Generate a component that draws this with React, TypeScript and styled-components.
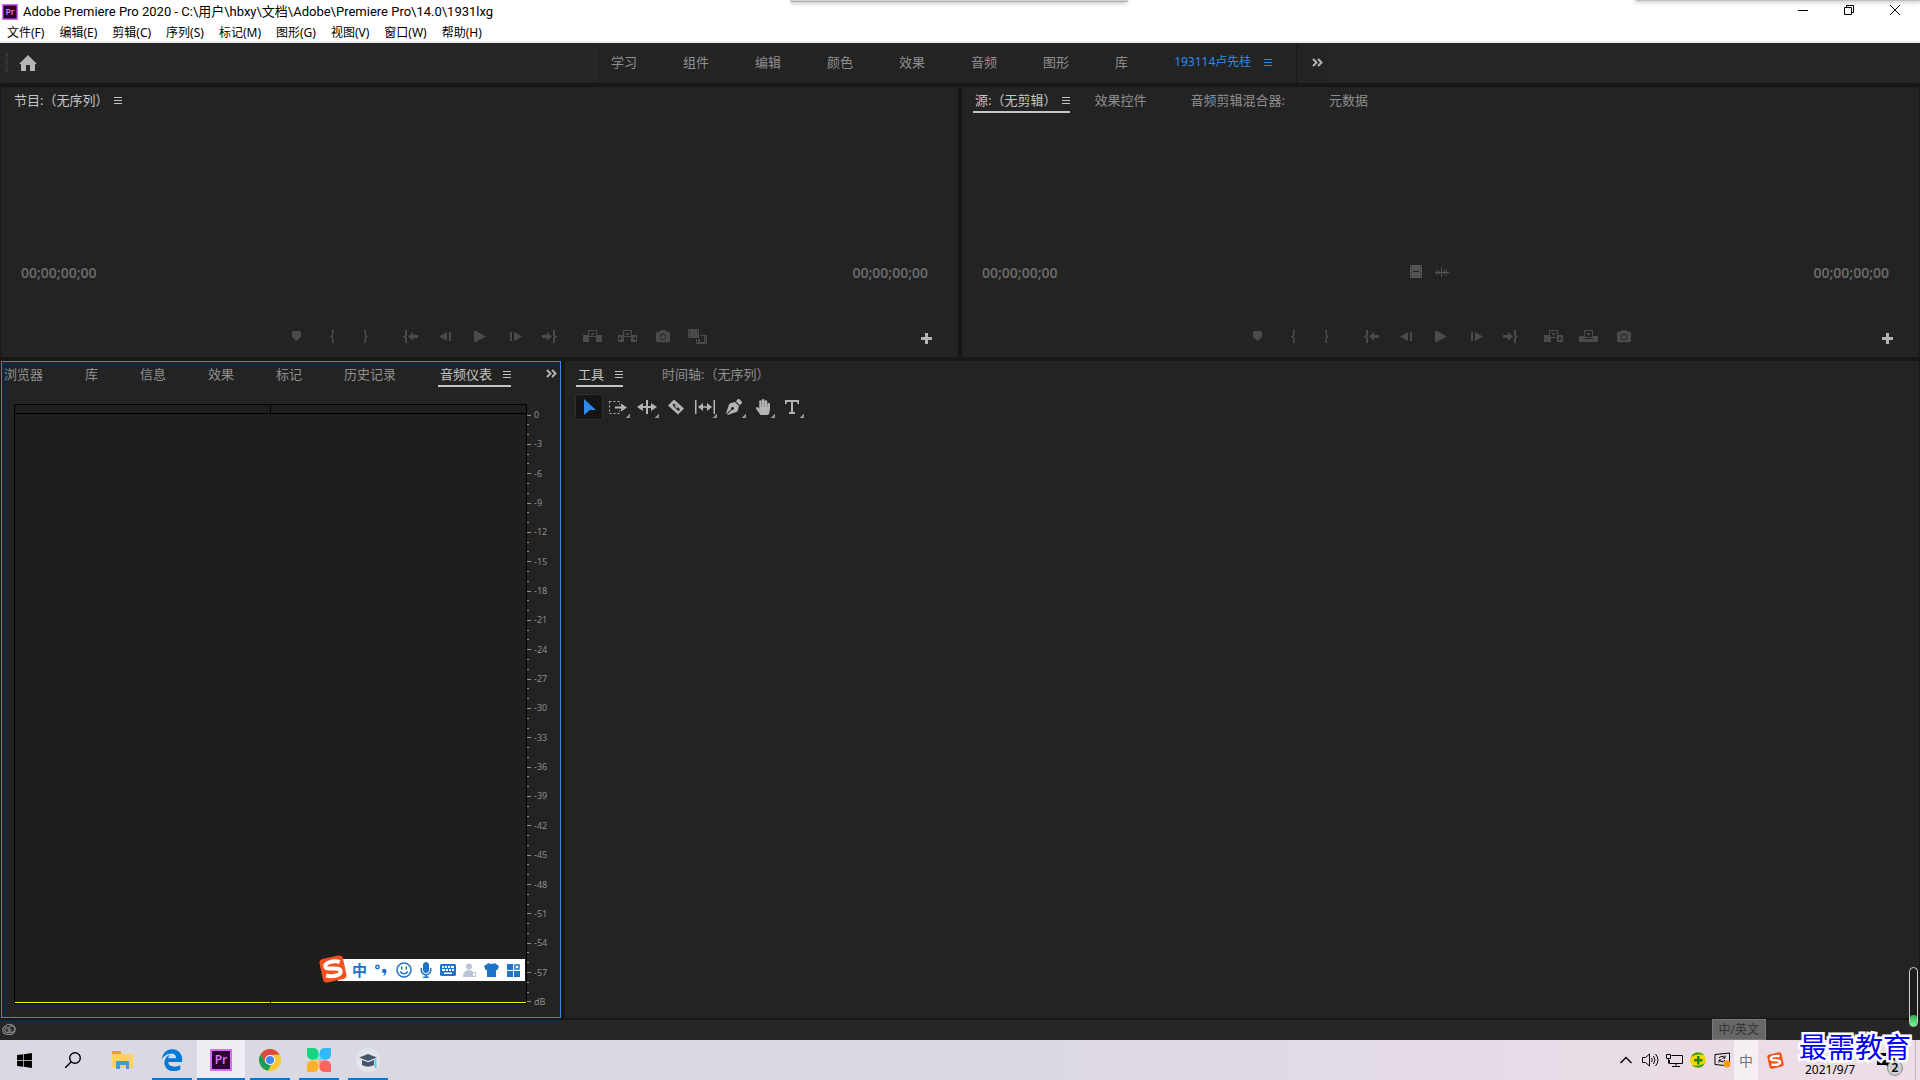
import React from "react";
import styled, { createGlobalStyle } from "styled-components";
import {
  FaCamera,
  FaGraduationCap,
  FaHandPaper,
  FaMicrophone,
  FaPenNib,
  FaWindows,
} from "react-icons/fa";

const color = {
  gap: "#171717",
  panel: "#232323",
  chrome: "#262626",
  text: "#8f8f8f",
  bright: "#c4c4c4",
  icon: "#b4b4b4",
  disabled: "#4b4b4b",
  accent: "#2d8ceb",
  ime: "#1e73c8",
};

const GlobalStyle = createGlobalStyle`
  * { box-sizing: border-box; }
  body {
    margin: 0;
    background: ${color.gap};
    font-family: "Noto Sans", "Noto Sans CJK SC", sans-serif;
    font-size: 12px;
  }
  button {
    margin: 0;
    padding: 0;
    border: 0;
    background: none;
    color: inherit;
    font: inherit;
    white-space: nowrap;
  }
  svg { display: block; flex: none; }
`;

const Screen = styled.div`
  position: relative;
  display: flex;
  flex-direction: column;
  height: 100vh;
  overflow: hidden;
`;

/* ---------- window frame ---------- */

const WindowFrame = styled.header`
  position: relative;
  background: #fff;
  color: #000;
  border-bottom: 2px solid #eef0ee;
`;

const TitleBar = styled.div`
  display: flex;
  align-items: center;
  height: 24px;
  padding-left: 2px;
  gap: 5px;
`;

const Title = styled.h1`
  flex: 1;
  margin: 0;
  font-family: Roboto, "Noto Sans CJK SC", sans-serif;
  font-size: 13px;
  line-height: 16px;
  font-weight: 400;
`;

const WindowButton = styled.button`
  display: grid;
  place-items: center;
  width: 46px;
  height: 20px;
  margin-bottom: 4px;
`;

const WindowButtons = styled.div`
  display: flex;
  padding-right: 2px;
`;

const MenuBar = styled.nav`
  display: flex;
  gap: 15px;
  height: 17px;
  padding-left: 7px;
  line-height: 16px;
`;

const DockedHandle = styled.div`
  position: absolute;
  top: 0;
  left: 790px;
  width: 338px;
  height: 2px;
  border-bottom: 1px solid #a8a8a8;
  border-radius: 0 0 4px 4px;
  background: #d8d8d8;
  box-shadow: 0 1px 4px rgba(0, 0, 0, 0.4);
`;

const DockedShade = styled.div`
  position: absolute;
  top: 0;
  right: 0;
  width: 284px;
  height: 1px;
  background: #c0c0c0;
  box-shadow: 0 0 4px 1px rgba(0, 0, 0, 0.3);
`;

/* ---------- workspace bar ---------- */

const WorkspaceBar = styled.div`
  display: flex;
  height: 40px;
  background: ${color.chrome};
`;

const HomeArea = styled.div`
  display: flex;
  align-items: center;
  gap: 11px;
  width: 598px;
  padding-left: 5px;
`;

const Grip = styled.span`
  width: 3px;
  height: 20px;
  background: repeating-linear-gradient(#3d3d3d 0 1px, transparent 1px 2px);
`;

const WorkspaceTabs = styled.nav`
  display: flex;
  align-items: center;
  gap: 46px;
  padding: 0 24px 0 13px;
  border-right: 1px solid ${color.gap};
  background: ${color.panel};
  color: ${color.text};
  font-size: 13px;
  line-height: 18px;
`;

const WorkspaceTab = styled.button<{ $active?: boolean }>`
  display: flex;
  align-items: center;
  gap: 13px;
  height: 38px;
  margin-bottom: 2px;
  color: ${(p) => (p.$active ? color.accent : "inherit")};
  font-size: ${(p) => (p.$active ? 12 : 13)}px;
`;

const Overflow = styled.button`
  display: grid;
  place-items: center;
  width: 30px;
  height: 38px;
  padding-left: 10px;
  background: ${color.panel};
  color: ${color.icon};
`;

/* ---------- panels ---------- */

const Panels = styled.main`
  flex: 1;
  display: grid;
  grid-template-rows: 270fr 657fr;
  gap: 4px;
  min-height: 0;
  padding: 4px 1px 2px;
`;

const PanelRow = styled.div<{ $columns: string }>`
  display: grid;
  grid-template-columns: ${(p) => p.$columns};
  gap: 4px;
  min-height: 0;
`;

const Panel = styled.section<{ $focused?: boolean }>`
  position: relative;
  display: flex;
  flex-direction: column;
  min-width: 0;
  min-height: 0;
  background: ${color.panel};
  border: ${(p) => (p.$focused ? `1px solid ${color.accent}` : "0")};
`;

const TabBar = styled.div<{ $left: number; $top?: number }>`
  display: flex;
  align-items: flex-start;
  justify-content: space-between;
  padding: ${(p) => p.$top ?? 4}px 2px 0 ${(p) => p.$left}px;
  color: ${color.text};
  font-size: 13px;
  line-height: 18px;
`;

const TabList = styled.div<{ $gap?: number }>`
  display: flex;
  gap: ${(p) => p.$gap ?? 0}px;
`;

const Tab = styled.button<{
  $active?: boolean;
  $underlined?: boolean;
  $roomy?: boolean;
  $tight?: boolean;
}>`
  display: flex;
  align-items: center;
  gap: ${(p) => (p.$tight ? 6 : 11)}px;
  padding: 0 ${(p) => (p.$roomy ? 20 : 0)}px 2px ${(p) => (p.$underlined ? 2 : 0)}px;
  border-bottom: 2px solid ${(p) => (p.$underlined ? color.bright : "transparent")};
  color: ${(p) => (p.$active ? color.bright : "inherit")};
`;

const TabOverflow = styled.button`
  padding: 4px 1px 0 0;
  color: ${color.icon};
`;

const Viewer = styled.div`
  flex: 1;
`;

const TimeRow = styled.div`
  display: grid;
  grid-template-columns: 1fr auto 1fr;
  align-items: center;
  height: 20px;
  padding: 0 30px 0 20px;
  color: #6c6c6c;
  font-family: "Open Sans", "Noto Sans", sans-serif;
  font-size: 14px;
  font-weight: 600;
  line-height: 20px;
`;

const TimeEnd = styled.span`
  justify-self: end;
`;

const DragHandles = styled.div`
  display: flex;
  gap: 13px;
  height: 20px;
  padding: 2px 12px 0 0;
  color: #555;
`;

const Transport = styled.div`
  display: grid;
  grid-template-columns: 1fr auto 1fr;
  height: 32px;
  margin: 37px 0 5px;
  color: ${color.disabled};
`;

const TransportGroup = styled.div<{ $end?: boolean }>`
  display: flex;
  justify-content: ${(p) => (p.$end ? "flex-end" : "flex-start")};
`;

const TransportButton = styled.button<{ $width?: number }>`
  display: grid;
  place-items: center;
  width: ${(p) => p.$width ?? 34}px;
  height: 32px;
`;

const Space = styled.span<{ $width: number }>`
  width: ${(p) => p.$width}px;
`;

const AddButton = styled.button`
  margin: 4px 26px 0 auto;
  color: ${color.icon};
`;

/* ---------- audio meter ---------- */

const MeterArea = styled.div`
  flex: 1;
  display: flex;
  min-height: 0;
  padding: 17px 0 13px 12px;
`;

const Meter = styled.div`
  flex: 1;
  display: grid;
  grid-template: 8px 1fr / 1fr 1fr;
  gap: 1px;
  padding: 1px;
  background: #000;
`;

const ClipLight = styled.span`
  background: #1e1e1e;
`;

const Channels = styled.div`
  grid-column: 1 / -1;
  display: flex;
  align-items: flex-end;
  gap: 1px;
  background: #1e1e1e;
`;

const Level = styled.span`
  flex: 1;
  height: 1px;
  background: #ffff00;
`;

const Scale = styled.ol`
  display: flex;
  flex-direction: column;
  justify-content: space-between;
  width: 33px;
  margin: 0;
  padding: 11px 0 2px;
  list-style: none;
  color: ${color.text};
  font-size: 9px;
  line-height: 12px;
`;

const Mark = styled.li<{ $major: boolean }>`
  display: flex;
  align-items: center;
  gap: 3px;
  height: 0;

  &::before {
    content: "";
    width: ${(p) => (p.$major ? 4 : 2)}px;
    height: 1px;
    background: ${color.text};
  }
`;

/* ---------- tools ---------- */

const ToolRow = styled.div`
  display: flex;
  gap: 1px;
  padding: 7px 0 0 10px;
  color: ${color.icon};
`;

const ToolButton = styled.button<{ $active?: boolean; $more?: boolean }>`
  position: relative;
  display: grid;
  place-items: center;
  width: 28px;
  height: 26px;
  border: 1px solid ${(p) => (p.$active ? "#303030" : "transparent")};
  border-radius: 3px;
  background: ${(p) => (p.$active ? "#151515" : "none")};
  color: ${(p) => (p.$active ? color.accent : "inherit")};

  &::after {
    content: "";
    display: ${(p) => (p.$more ? "block" : "none")};
    position: absolute;
    right: 1px;
    bottom: 1px;
    width: 4px;
    height: 4px;
    background: linear-gradient(135deg, transparent 50%, ${color.text} 50%);
  }
`;

const StatusBar = styled.footer`
  display: flex;
  align-items: center;
  height: 20px;
  padding: 0 0 2px 2px;
  background: ${color.chrome};
  color: #8a8a8a;
`;

/* ---------- input method bar ---------- */

const ImeBar = styled.div`
  position: absolute;
  right: 35px;
  bottom: 36px;
  display: flex;
  align-items: center;
  height: 22px;
  padding: 0 4px 0 14px;
  gap: 7px;
  background: #fff;
  color: ${color.ime};
`;

const ImeLogo = styled.span`
  position: absolute;
  left: -19px;
  top: -4px;
`;

const ImeButton = styled.button<{ $muted?: boolean }>`
  display: grid;
  place-items: center;
  width: 15px;
  height: 20px;
  color: ${(p) => (p.$muted ? "#b8c4d8" : "inherit")};
  font-size: 15px;
  font-weight: 700;
  line-height: 20px;
`;

/* ---------- taskbar ---------- */

const Taskbar = styled.footer`
  display: flex;
  height: 40px;
  background: linear-gradient(90deg, #dad9e3 0%, #d9d8e3 45%, #e6dbe6 80%, #eedde6 100%);
  color: #000;
`;

const AppButton = styled.button<{ $running?: boolean; $active?: boolean; $width?: number }>`
  position: relative;
  display: grid;
  place-items: center;
  width: ${(p) => p.$width ?? 48}px;
  height: 40px;
  margin-right: 1px;
  background: ${(p) => (p.$active ? "#eeedf3" : "none")};

  &::after {
    content: "";
    display: ${(p) => (p.$running ? "block" : "none")};
    position: absolute;
    bottom: 0;
    left: ${(p) => (p.$active ? 0 : 4)}px;
    right: ${(p) => (p.$active ? 0 : 4)}px;
    height: 2px;
    background: #0078d7;
  }
`;

const Tray = styled.div`
  display: flex;
  align-items: center;
  margin-left: auto;
`;

const TrayButton = styled.button<{ $lit?: boolean; $width?: number }>`
  display: grid;
  place-items: center;
  width: ${(p) => p.$width ?? 24}px;
  height: 40px;
  background: ${(p) => (p.$lit ? "rgba(255, 255, 255, 0.5)" : "none")};
  color: ${(p) => (p.$lit ? "#777" : "#000")};
  font-size: 14px;
`;

const Clock = styled.time`
  display: flex;
  flex-direction: column;
  align-items: center;
  width: 76px;
  font-size: 12px;
  line-height: 19px;
`;

const Notices = styled.button`
  position: relative;
  display: flex;
  align-items: center;
  width: 47px;
  height: 40px;
  padding-left: 9px;
`;

const Badge = styled.span`
  position: absolute;
  right: 12px;
  bottom: 4px;
  width: 16px;
  height: 16px;
  border: 1px solid #8c8c8c;
  border-radius: 50%;
  background: #cfcfcf;
  font-size: 12px;
  font-weight: 600;
  line-height: 14px;
  text-align: center;
`;

const ShowDesktop = styled.button`
  width: 5px;
  height: 40px;
  border-left: 1px solid #c3b8c2;
`;

const Tip = styled.div`
  position: absolute;
  right: 154px;
  bottom: 40px;
  padding: 0 6px;
  border: 1px solid #7a7a7a;
  background: #676767;
  color: #343434;
  font-size: 12px;
  line-height: 19px;
`;

const Watermark = styled.div`
  position: absolute;
  right: 9px;
  bottom: 19px;
  color: #0000f0;
  font-size: 28px;
  line-height: 28px;
  -webkit-text-stroke: 5px #fff;
  paint-order: stroke fill;
`;

const Gauge = styled.div`
  position: absolute;
  right: 2px;
  bottom: 53px;
  display: flex;
  align-items: flex-end;
  width: 9px;
  height: 60px;
  border: 1px solid #d0d0d0;
  border-radius: 5px;
  background: #1c1c1c;
`;

const GaugeFill = styled.span`
  flex: 1;
  height: 11px;
  border-radius: 3px;
  background: linear-gradient(#25b455, #7bf58c);
`;

/* ---------- drawings ---------- */

type IconProps = { w: number; h: number; children: React.ReactNode };
const Icon = ({ w, h, children }: IconProps) => (
  <svg width={w} height={h} viewBox={`0 0 ${w} ${h}`} fill="currentColor" aria-hidden="true">
    {children}
  </svg>
);

const Burger = () => (
  <Icon w={8} h={9}>
    <path d="M0 1h8v1H0zM0 4h8v1H0zM0 7h8v1H0z" />
  </Icon>
);

const Chevrons = () => (
  <Icon w={11} h={9}>
    <path d="M1 1l3.500 3.500L1 8M6 1l3.500 3.500L6 8" fill="none" stroke="currentColor" strokeWidth="2" />
  </Icon>
);

const PrLogo = ({ size }: { size: number }) => (
  <svg width={size} height={size} viewBox="0 0 22 22" aria-hidden="true">
    <rect x="1" y="1" width="20" height="20" fill="#2a0034" stroke="#d76bf5" strokeWidth="2" />
    <text x="11" y="15" fill="#e07bff" fontSize="12" fontFamily="Open Sans, sans-serif" textAnchor="middle" fontWeight="600">
      Pr
    </text>
  </svg>
);

const SogouLogo = ({ size }: { size: number }) => (
  <svg width={size} height={size} viewBox="0 0 28 28" aria-hidden="true">
    <g transform="rotate(-12 14 14)">
      <rect x="2" y="2" width="24" height="24" rx="4" fill="#f4511e" />
      <path
        d="M22 8.500C16 5.500 7 6 7 10c0 4.500 14 2.500 14 7.500 0 4.500-9 4.500-15 1.500"
        fill="none"
        stroke="#fff"
        strokeWidth="4"
      />
    </g>
  </svg>
);

const MarkerIcon = () => (
  <Icon w={9} h={10}>
    <path d="M1 0h7l1 1v5L4.500 10 0 6V1z" />
  </Icon>
);
const InIcon = () => (
  <Icon w={5} h={13}>
    <path d="M2 0h2v1H3.500v4L2.500 6.500 3.500 8v4H4v1H2V8L0 6.500 2 5z" />
  </Icon>
);
const OutIcon = () => (
  <Icon w={5} h={13}>
    <path d="M1 0h2v5l2 1.500L3 8v5H1v-1h.500V8l1-1.500-1-1.500V1H1z" />
  </Icon>
);
const GoInIcon = () => (
  <Icon w={15} h={13}>
    <path d="M2 0h2v5L3 6.500 4 8v5H2V8L0 6.500 2 5zM5 6.500L10 2v3h5v3h-5v3z" />
  </Icon>
);
const GoOutIcon = () => (
  <Icon w={15} h={13}>
    <path d="M13 0h-2v5l1 1.500L11 8v5h2V8l2-1.500L13 5zM10 6.500L5 2v3H0v3h5v3z" />
  </Icon>
);
const StepBackIcon = () => (
  <Icon w={12} h={9}>
    <path d="M8 0v9L0 4.500zM10 0h2v9h-2z" />
  </Icon>
);
const StepForwardIcon = () => (
  <Icon w={12} h={9}>
    <path d="M4 0v9l8-4.500zM0 0h2v9H0z" />
  </Icon>
);
const PlayIcon = () => (
  <Icon w={12} h={11}>
    <path d="M0 0h2l10 5.500L2 11H0z" />
  </Icon>
);
const LiftIcon = () => (
  <Icon w={19} h={12}>
    <path d="M0 5h5V0h9v5h5v7h-6V7H6v5H0zM6 1v5h7V1zM9.500 2.500L11.500 5h-4z" fillRule="evenodd" />
  </Icon>
);
const ExtractIcon = () => (
  <Icon w={19} h={12}>
    <path
      d="M0 5h5V0h9v5h5v7h-6V7H6v5H0zM6 1v5h7V1zM9.500 2.500L11.500 5h-4zM1 6.500v4L4 8.500zM18 6.500v4L15 8.500z"
      fillRule="evenodd"
    />
  </Icon>
);
const InsertIcon = () => (
  <Icon w={19} h={12}>
    <path
      d="M0 5h5V0h9v5h5v7h-6V8H7v4H0zM6 1v6h7V1zM7.500 3h4L9.500 6zM15 6.500v4L18 8.500z"
      fillRule="evenodd"
    />
  </Icon>
);
const OverwriteIcon = () => (
  <Icon w={19} h={12}>
    <path d="M0 6h5V0h9v6h5v6H0zM6 1v6h7V1zM7.500 3h4L9.500 6zM5 8v1h9V8z" fillRule="evenodd" />
  </Icon>
);
const CompareIcon = () => (
  <Icon w={19} h={15}>
    <path
      d="M0 0h11v9H0zM1 1v1h1V1zM1 3v1h1V3zM1 5v1h1V5zM1 7v1h1V7zM9 1v1h1V1zM9 3v1h1V3zM12 6h7v9H8v-5h1v4h1v-4h2v3h4V7h-4zM17 7v1h1V7zM17 9v1h1V9zM17 11v1h1v-1zM17 13v1h1v-1z"
      fillRule="evenodd"
    />
  </Icon>
);
const FilmIcon = () => (
  <Icon w={12} h={13}>
    <path
      d="M0 0h12v13H0zM1 1v1h1V1zM1 4v1h1V4zM1 7v1h1V7zM1 10v1h1v-1zM10 1v1h1V1zM10 4v1h1V4zM10 7v1h1V7zM10 10v1h1v-1zM3 6v1h6V6z"
      fillRule="evenodd"
    />
  </Icon>
);
const WaveIcon = () => (
  <Icon w={14} h={15}>
    <path d="M0 7.500h14M2 4.500v6M4.500 6v3M6.500 2.500v10M9 5.500v4M11 4v7" fill="none" stroke="currentColor" />
  </Icon>
);
const PlusIcon = () => (
  <Icon w={11} h={11}>
    <path d="M4 0h3v4h4v3H7v4H4V7H0V4h4z" />
  </Icon>
);

const SelectIcon = () => (
  <Icon w={13} h={18}>
    <path d="M1 1l12 11H7l-6 5z" />
  </Icon>
);
const TrackIcon = () => (
  <Icon w={18} h={13}>
    <path d="M.5.500h10v3M.500.500v12h10v-3" fill="none" stroke="currentColor" strokeDasharray="2 2" />
    <path d="M6 5.500h6v-3l6 4-6 4v-3H6z" />
  </Icon>
);
const RippleIcon = () => (
  <Icon w={20} h={14}>
    <path d="M9 0h2v14H9zM0 7l6-4v3h8V3l6 4-6 4V8H6v3z" />
  </Icon>
);
const RazorIcon = () => (
  <Icon w={16} h={16}>
    <path d="M6 0.500l10 9-6 6-10-9zM4.500 5.500l1 2 5 4.500 1.500-1-1-2-5-4.500z" fillRule="evenodd" />
    <path d="M7 6.500l2.500 2.500" stroke="currentColor" strokeWidth="1.500" />
  </Icon>
);
const SlipIcon = () => (
  <Icon w={20} h={14}>
    <path d="M0 0h1.500v14H0zM18.500 0H20v14h-1.500zM3 7l5-4v3.250h4V3l5 4-5 4V7.750H8V11z" />
  </Icon>
);
const TypeIcon = () => (
  <Icon w={14} h={14}>
    <path d="M0 0h14v4h-1.500L12 2H8v10h2v2H4v-2h2V2H2l-.500 2H0z" />
  </Icon>
);

const ExplorerIcon = () => (
  <Icon w={22} h={18}>
    <path d="M0 1h8l2 2h11v14H0z" fill="#ffd35c" />
    <path d="M0 0h9v3H0z" fill="#e2a21b" />
    <path d="M4 18v-8h13v8h-3v-4H8v4z" fill="#3c9ae0" />
  </Icon>
);
const EdgeIcon = () => (
  <svg width="22" height="22" viewBox="16 0 480 500" fill="#0078d7" aria-hidden="true">
    <path d="M486.286 243.671c0-44.032-7.754-84.465-28.801-122.405C416.498 47.879 343.912 8.001 258.893 8.001 118.962 7.724 40.617 113.214 26.056 227.679c42.429-61.312 117.073-121.376 220.375-124.966 0 0 109.666 0 99.419 104.957H169.997c6.369-37.386 18.554-58.986 34.339-78.926-75.048 34.893-121.850 96.096-120.742 188.315.830 71.448 50.124 144.836 120.743 171.976 83.357 31.847 192.776 7.200 240.132-21.324V363.307c-80.864 56.494-270.871 60.925-272.255-67.572h314.072z" />
  </svg>
);
const ChromeIcon = () => (
  <Icon w={22} h={22}>
    <circle cx="11" cy="11" r="11" fill="#fbc934" />
    <path d="M1.500 5.500A11 11 0 0 1 20.500 5.500L11 6 6 13z" fill="#dd4b3e" />
    <path d="M1.500 5.500L7 14l5 2-3 5.800A11 11 0 0 1 1.500 5.500z" fill="#1d9d58" />
    <circle cx="11" cy="11" r="5" fill="#fff" />
    <circle cx="11" cy="11" r="4" fill="#4286f5" />
  </Icon>
);
const CloverIcon = () => (
  <Icon w={24} h={24}>
    <path d="M0 0h7q5 1 5 7v5H7Q0 12 0 6z" fill="#17d483" />
    <path d="M24 0h-7q-5 1-5 7v5h5q7 0 7-6z" fill="#31b8fb" />
    <path d="M0 24h7q5-1 5-7v-5H7q-7 0-7 6z" fill="#ffb129" />
    <path d="M24 24h-7q-5-1-5-7v-5h5q7 0 7 6z" fill="#ff615f" />
    <path d="M12 5q1 6 7 7-6 1-7 7-1-6-7-7 6-1 7-7z" fill="#fff" opacity="0.3" />
    <path d="M12 0v24M0 12h24" stroke="#fff" strokeWidth="0.500" opacity="0.600" />
  </Icon>
);
const SchoolIcon = () => (
  <Icon w={24} h={24}>
    <circle cx="12" cy="12" r="12" fill="#e3e6ea" />
    <path d="M3 9.500L12 6l9 3.500-9 3.500z" fill="#46566b" />
    <path d="M6 12l6 2.300 6-2.300v5q-6 3.500-12 0z" fill="#46566b" />
    <path d="M19.500 11v9" stroke="#62c8ee" strokeWidth="2" />
  </Icon>
);
const SearchIcon = () => (
  <Icon w={16} h={16}>
    <circle cx="10" cy="6" r="5.300" fill="none" stroke="#000" strokeWidth="1.400" />
    <path d="M6 10l-6 6" stroke="#000" strokeWidth="1.500" />
  </Icon>
);
const CloudIcon = () => (
  <Icon w={16} h={12}>
    <g fill="none" stroke="currentColor" strokeWidth="1.200">
      <path d="M5 11.300A4.400 4.400 0 0 1 4 2.700 5.300 5.300 0 1 1 10 11.300z" />
      <path d="M10 9.300H8.500L5.500 6M7.500 9.300H5.300a2.400 2.400 0 1 1 1.500-4.200L9.500 7.500M7 4.500a3.200 3.200 0 1 1 3 4.800" />
    </g>
  </Icon>
);
const ShirtIcon = () => (
  <Icon w={15} h={14}>
    <path d="M4.500 0q3 2 6 0L15 3l-1.500 4H12v7H3V7H1.500L0 3z" />
  </Icon>
);
const NoticeIcon = () => (
  <Icon w={20} h={18}>
    <path d="M0 2h18v12h-5v4l-4-4H0zM3 5v1h12V5zM3 8v1h12V8z" fillRule="evenodd" />
  </Icon>
);

const transportStart = [
  { label: "添加标记", width: 38, icon: <MarkerIcon /> },
  { label: "标记入点", width: 34, icon: <InIcon /> },
  { label: "标记出点", width: 32, icon: <OutIcon /> },
];

function Monitor({ tabs, source }: { tabs: React.ReactNode; source?: boolean }) {
  return (
    <Panel>
      {tabs}
      <Viewer />
      <TimeRow>
        <span>00;00;00;00</span>
        <DragHandles>
          {source && <FilmIcon />}
          {source && <WaveIcon />}
        </DragHandles>
        <TimeEnd>00;00;00;00</TimeEnd>
      </TimeRow>
      <Transport>
        <TransportGroup $end>
          {transportStart.map((b) => (
            <TransportButton key={b.label} aria-label={b.label} $width={b.width}>
              {b.icon}
            </TransportButton>
          ))}
          <Space $width={12} />
          <TransportButton aria-label="转到入点"><GoInIcon /></TransportButton>
          <TransportButton aria-label="后退一帧"><StepBackIcon /></TransportButton>
        </TransportGroup>
        <TransportButton aria-label="播放" $width={36}><PlayIcon /></TransportButton>
        <TransportGroup>
          <TransportButton aria-label="前进一帧" $width={36}><StepForwardIcon /></TransportButton>
          <TransportButton aria-label="转到出点" $width={32}><GoOutIcon /></TransportButton>
          <Space $width={10} />
          <TransportButton aria-label={source ? "插入" : "提升"}>
            {source ? <InsertIcon /> : <LiftIcon />}
          </TransportButton>
          <TransportButton aria-label={source ? "覆盖" : "提取"} $width={36}>
            {source ? <OverwriteIcon /> : <ExtractIcon />}
          </TransportButton>
          <TransportButton aria-label="导出帧"><FaCamera size={14} /></TransportButton>
          {!source && (
            <TransportButton aria-label="比较视图" $width={36}><CompareIcon /></TransportButton>
          )}
          <AddButton aria-label="按钮编辑器"><PlusIcon /></AddButton>
        </TransportGroup>
      </Transport>
    </Panel>
  );
}

const menus = ["文件(F)", "编辑(E)", "剪辑(C)", "序列(S)", "标记(M)", "图形(G)", "视图(V)", "窗口(W)", "帮助(H)"];
const workspaces = ["学习", "组件", "编辑", "颜色", "效果", "音频", "图形", "库"];
const panelTabs = ["浏览器", "库", "信息", "效果", "标记", "历史记录"];
const marks = Array.from({ length: 61 }, (_, i) => i);

const markLabel = (i: number) => {
  if (i % 3 !== 0) return "";
  if (i === 60) return "dB";
  return i === 0 ? "0" : `-${i}`;
};

export default function App() {
  return (
    <Screen>
      <GlobalStyle />
      <WindowFrame>
        <TitleBar>
          <PrLogo size={16} />
          <Title>Adobe Premiere Pro 2020 - C:\用户\hbxy\文档\Adobe\Premiere Pro\14.0\1931lxg</Title>
          <WindowButtons>
            <WindowButton aria-label="最小化">
              <Icon w={10} h={10}><path d="M0 5h10v1H0z" /></Icon>
            </WindowButton>
            <WindowButton aria-label="还原">
              <Icon w={10} h={10}>
                <path d="M.5 2.500h7v7h-7zM2.500 2.500v-2h7v7h-2" fill="none" stroke="#000" />
              </Icon>
            </WindowButton>
            <WindowButton aria-label="关闭">
              <Icon w={10} h={10}><path d="M0 0l10 10M10 0L0 10" stroke="#000" /></Icon>
            </WindowButton>
          </WindowButtons>
        </TitleBar>
        <MenuBar>
          {menus.map((m) => (
            <button key={m}>{m}</button>
          ))}
        </MenuBar>
        <DockedHandle />
        <DockedShade />
      </WindowFrame>

      <WorkspaceBar>
        <HomeArea>
          <Grip />
          <button aria-label="主页">
            <svg width="18" height="16" viewBox="0 0 18 16" fill={color.icon}>
              <path d="M9 0l9 9h-2v7h-5v-6H7v6H2V9H0z" />
            </svg>
          </button>
        </HomeArea>
        <WorkspaceTabs>
          {workspaces.map((w) => (
            <WorkspaceTab key={w}>{w}</WorkspaceTab>
          ))}
          <WorkspaceTab $active>
            193114卢先桂
            <Burger />
          </WorkspaceTab>
        </WorkspaceTabs>
        <Overflow aria-label="更多工作区"><Chevrons /></Overflow>
      </WorkspaceBar>

      <Panels>
        <PanelRow $columns="minmax(0, 1fr) minmax(0, 1fr)">
          <Monitor
            tabs={
              <TabBar $left={13}>
                <Tab $active $tight>节目:（无序列）<Burger /></Tab>
              </TabBar>
            }
          />
          <Monitor
            source
            tabs={
              <TabBar $left={11}>
                <TabList $gap={24}>
                  <Tab $active $underlined $tight>源:（无剪辑）<Burger /></Tab>
                  <Tab $roomy>效果控件</Tab>
                  <Tab $roomy>音频剪辑混合器:</Tab>
                  <Tab>元数据</Tab>
                </TabList>
              </TabBar>
            }
          />
        </PanelRow>

        <PanelRow $columns="minmax(0, 560fr) minmax(0, 1354fr)">
          <Panel $focused>
            <TabBar $left={2} $top={3}>
              <TabList $gap={42}>
                {panelTabs.map((t) => (
                  <Tab key={t}>{t}</Tab>
                ))}
                <Tab $active $underlined>音频仪表<Burger /></Tab>
              </TabList>
              <TabOverflow aria-label="更多面板"><Chevrons /></TabOverflow>
            </TabBar>
            <MeterArea>
              <Meter>
                <ClipLight />
                <ClipLight />
                <Channels>
                  <Level />
                  <Level />
                </Channels>
              </Meter>
              <Scale>
                {marks.map((i) => (
                  <Mark key={i} $major={i % 3 === 0}>{markLabel(i)}</Mark>
                ))}
              </Scale>
            </MeterArea>
            <ImeBar>
              <ImeLogo><SogouLogo size={28} /></ImeLogo>
              <ImeButton>中</ImeButton>
              <ImeButton aria-label="标点">
                <Icon w={13} h={14}>
                  <circle cx="2.500" cy="4" r="1.700" fill="none" stroke="currentColor" strokeWidth="1.500" />
                  <path d="M7 8a2.200 2.200 0 1 1 4.500 0c0 3-2 5-4 5.500 1.500-1.500 2-2.500 1.800-3.500A2 2 0 0 1 7 8z" />
                </Icon>
              </ImeButton>
              <ImeButton aria-label="表情">
                <Icon w={16} h={16}>
                  <circle cx="8" cy="8" r="7" fill="none" stroke="currentColor" strokeWidth="1.500" />
                  <path d="M5 4.500h1.500v3H5zM9.500 4.500H11v3H9.500z" />
                  <path d="M4 9.500q4 4.500 8 0" fill="none" stroke="currentColor" strokeWidth="1.500" />
                </Icon>
              </ImeButton>
              <ImeButton aria-label="语音"><FaMicrophone size={16} /></ImeButton>
              <ImeButton aria-label="键盘">
                <Icon w={16} h={12}>
                  <path
                    d="M1 0h14l1 1v10l-1 1H1l-1-1V1zM2 2v2h2V2zM5 2v2h2V2zM8 2v2h2V2zM11 2v2h3V2zM2 5v2h3V5zM6 5v2h2V5zM9 5v2h2V5zM12 5v2h2V5zM4 8.500V10h8V8.500z"
                    fillRule="evenodd"
                  />
                </Icon>
              </ImeButton>
              <ImeButton $muted aria-label="登录">
                <Icon w={14} h={15}>
                  <circle cx="6" cy="3.500" r="3" />
                  <path d="M0 14q0-7 6-7 3 0 4 2v5z" />
                  <path d="M9.500 9.500h3v4h-3z" fill="#fff" stroke="currentColor" />
                </Icon>
              </ImeButton>
              <ImeButton aria-label="皮肤"><ShirtIcon /></ImeButton>
              <ImeButton aria-label="工具箱">
                <Icon w={13} h={13}>
                  <path d="M0 0h6v6H0zM0 7h6v6H0zM7 7h6v6H7z" />
                  <path d="M8 1h4v4H8z" fill="none" stroke="currentColor" strokeWidth="1.500" />
                </Icon>
              </ImeButton>
            </ImeBar>
          </Panel>

          <Panel>
            <TabBar $left={11}>
              <TabList $gap={39}>
                <Tab $active $underlined>工具<Burger /></Tab>
                <Tab>时间轴:（无序列）</Tab>
              </TabList>
            </TabBar>
            <ToolRow>
              <ToolButton $active aria-label="选择工具"><SelectIcon /></ToolButton>
              <ToolButton $more aria-label="向前选择轨道工具"><TrackIcon /></ToolButton>
              <ToolButton $more aria-label="波纹编辑工具"><RippleIcon /></ToolButton>
              <ToolButton aria-label="剃刀工具"><RazorIcon /></ToolButton>
              <ToolButton $more aria-label="外滑工具"><SlipIcon /></ToolButton>
              <ToolButton $more aria-label="钢笔工具"><FaPenNib size={16} /></ToolButton>
              <ToolButton $more aria-label="手形工具"><FaHandPaper size={16} /></ToolButton>
              <ToolButton $more aria-label="文字工具"><TypeIcon /></ToolButton>
            </ToolRow>
          </Panel>
        </PanelRow>
      </Panels>

      <StatusBar><CloudIcon /></StatusBar>

      <Taskbar>
        <AppButton aria-label="开始"><FaWindows size={17} /></AppButton>
        <AppButton aria-label="搜索"><SearchIcon /></AppButton>
        <AppButton aria-label="文件资源管理器" $width={49}><ExplorerIcon /></AppButton>
        <AppButton $running aria-label="Edge"><EdgeIcon /></AppButton>
        <AppButton $running $active aria-label="Premiere Pro"><PrLogo size={22} /></AppButton>
        <AppButton $running aria-label="Chrome"><ChromeIcon /></AppButton>
        <AppButton $running aria-label="应用"><CloverIcon /></AppButton>
        <AppButton $running aria-label="课堂"><SchoolIcon /></AppButton>
        <Tray>
          <TrayButton aria-label="显示隐藏的图标">
            <Icon w={12} h={8}><path d="M.5 7L6 1.500 11.500 7" fill="none" stroke="#000" strokeWidth="1.300" /></Icon>
          </TrayButton>
          <TrayButton aria-label="音量">
            <Icon w={17} h={14}>
              <g fill="none" stroke="#000">
                <path d="M.5 4.500h3l4-3.500v12l-4-3.500h-3zM9.500 5q1.500 2 0 4M11.500 3q3 4 0 8M13.500 1q5 6 0 12" />
              </g>
            </Icon>
          </TrayButton>
          <TrayButton aria-label="网络">
            <Icon w={17} h={14}>
              <path d="M5.500 2.500h11v8h-13V7M10 10.500v3M6 13.500h8M.5 1.500h4v4h-4zM2.500 5.500v5" fill="none" stroke="#000" />
            </Icon>
          </TrayButton>
          <TrayButton aria-label="安全卫士">
            <Icon w={16} h={16}>
              <circle cx="8" cy="8" r="8" fill="#f8d800" />
              <path d="M1 5A8 8 0 0 1 14 3Q7 1 1 5zM15 11A8 8 0 0 1 2 13q7 2 13-2z" fill="#2d9b2d" />
              <path d="M7 4h2.500v3h3v2.500h-3v3H7v-3H4V7h3z" fill="#178a1e" />
            </Icon>
          </TrayButton>
          <TrayButton aria-label="系统更新">
            <Icon w={17} h={16}>
              <path d="M1 2.500l14.500-1.500v13L1 12.500z" fill="none" stroke="#000" />
              <path d="M5 6q3-3.500 6 0M11 3.500V6H8.500M11 8q-3 3.500-6 0M5 10.500V8h2.500" fill="none" stroke="#000" />
              <circle cx="13" cy="12" r="3.500" fill="#ff9a00" />
            </Icon>
          </TrayButton>
          <TrayButton $lit>中</TrayButton>
          <TrayButton $width={34} aria-label="搜狗输入法"><SogouLogo size={17} /></TrayButton>
          <Clock>
            <span>17:19</span>
            <span>2021/9/7</span>
          </Clock>
          <Notices aria-label="通知">
            <NoticeIcon />
            <Badge>2</Badge>
          </Notices>
          <ShowDesktop aria-label="显示桌面" />
        </Tray>
      </Taskbar>

      <Tip>中/英文</Tip>
      <Gauge><GaugeFill /></Gauge>
      <Watermark>最需教育</Watermark>
    </Screen>
  );
}
